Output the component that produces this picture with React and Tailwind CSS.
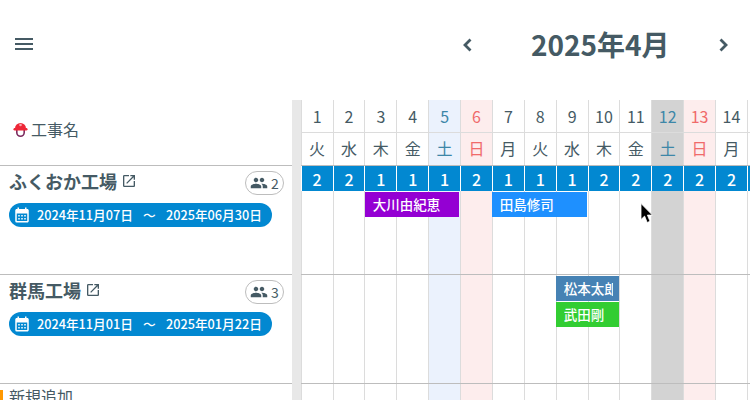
import React from 'react';
import { MdMenu, MdPeople, MdOpenInNew, MdCalendarMonth } from 'react-icons/md';

const DAYS = [
  { d: 1, w: '火', c: 2 },
  { d: 2, w: '水', c: 2 },
  { d: 3, w: '木', c: 1 },
  { d: 4, w: '金', c: 1 },
  { d: 5, w: '土', c: 1, kind: 'sat' },
  { d: 6, w: '日', c: 2, kind: 'sun' },
  { d: 7, w: '月', c: 1 },
  { d: 8, w: '火', c: 1 },
  { d: 9, w: '水', c: 1 },
  { d: 10, w: '木', c: 2 },
  { d: 11, w: '金', c: 2 },
  { d: 12, w: '土', c: 2, kind: 'hol' },
  { d: 13, w: '日', c: 2, kind: 'sun' },
  { d: 14, w: '月', c: 2 },
];

const cellBg = { sat: 'bg-[#ebf2fd]', sun: 'bg-[#fdeded]', hol: 'bg-[#d3d3d3]' };
const textColor = { sat: 'text-[#3d87a8]', sun: 'text-[#f06a6a]', hol: 'text-[#3d87a8]' };

function HelmetIcon() {
  return (
    <svg width="15" height="17" viewBox="0 0 15 17">
      <path d="M3 10v2.5a4.5 4.5 0 0 0 9 0V10h-1.6v2.5a2.9 2.9 0 0 1-5.8 0V10z" fill="#7b2a5e" />
      <path d="M2 8.5a5.5 5.5 0 0 1 11 0z" fill="#ee2737" />
      <rect x="0.5" y="8" width="14" height="2.4" rx="1.2" fill="#ee2737" />
      <circle cx="7.5" cy="5" r="1.3" fill="#f8a5ac" />
    </svg>
  );
}

function Chevron({ d }) {
  return (
    <svg width="10" height="14" viewBox="0 0 10 14" className="shrink-0">
      <path d={d} fill="none" stroke="#455a64" strokeWidth="2.8" />
    </svg>
  );
}

function Site({ name, people, from, to }) {
  return (
    <div className="h-[109px] border-b border-[#bdbdbd] pl-[9px] pr-2 pt-[5px]">
      <div className="flex items-center h-6">
        <div className="flex items-center pb-[4px]">
          <span className="text-[18px] font-bold text-[#455a64] leading-6">{name}</span>
          <MdOpenInNew className="ml-[4px] w-4 h-4 text-[#455a64]" />
        </div>
        <div className="ml-auto flex items-center justify-center w-[39px] h-6 rounded-full border border-[#bdbdbd] text-[#455a64]">
          <MdPeople className="w-[18px] h-[18px]" />
          <span className="ml-[3px] text-[14px] leading-none">{people}</span>
        </div>
      </div>
      <div className="mt-2 flex items-center w-[263px] h-6 rounded-full bg-[#0288d1] text-white text-[12.7px] font-medium pl-[4px]">
        <MdCalendarMonth className="w-[18px] h-[18px] shrink-0" />
        <span className="ml-[6px] w-[96px] whitespace-nowrap">{from}</span>
        <span className="ml-[10px] w-[13px]">〜</span>
        <span className="ml-[10px] whitespace-nowrap">{to}</span>
      </div>
    </div>
  );
}

function Cells({ height }) {
  return (
    <div className={`flex ${height}`}>
      {DAYS.map((x) => (
        <div key={x.d} className={`w-[31.875px] shrink-0 border-l border-[#dcdcdc] ${cellBg[x.kind] || ''}`} />
      ))}
      <div className="w-[31.875px] shrink-0 border-l border-[#dcdcdc]" />
    </div>
  );
}

function Bar({ pos, color, children }) {
  return (
    <div className={`absolute h-[25px] pl-2 pr-[6px] text-white text-[13.5px] font-medium leading-[25px] ${pos} ${color}`}>
      <div className="overflow-hidden whitespace-nowrap">{children}</div>
    </div>
  );
}

export default function App() {
  return (
    <div className="relative w-[750px] h-[400px] overflow-hidden bg-white text-[#455a64] font-['Noto_Sans_CJK_JP','Noto_Sans',sans-serif]">
      {/* top bar */}
      <header className="flex items-center h-[100px] pb-[12px]">
        <MdMenu className="ml-[12px] w-6 h-6 text-[#455a64]" />
        <div className="ml-[426px] pt-[2px]"><Chevron d="M8.5 1.5 L3 7 L8.5 12.5" /></div>
        <h1 className="ml-[59px] w-[136px] text-[28px] font-bold whitespace-nowrap leading-none">2025年4月</h1>
        <div className="ml-[52px] pt-[2px]"><Chevron d="M1.5 1.5 L7 7 L1.5 12.5" /></div>
      </header>

      <div className="flex">
        {/* left names */}
        <div className="w-[292px] shrink-0">
          <div className="h-[66px] border-b border-[#bdbdbd] flex items-center pl-[13px] pb-[8px]">
            <HelmetIcon />
            <span className="ml-[3px] text-[16px] leading-none">工事名</span>
          </div>
          <Site name="ふくおか工場" people={2} from="2024年11月07日" to="2025年06月30日" />
          <Site name="群馬工場" people={3} from="2024年11月01日" to="2025年01月22日" />
          <div className="relative pl-[9px] pt-[2px] text-[16px] leading-[20px] whitespace-nowrap">
            <span className="absolute left-0 top-[6px] w-[3px] h-[12px] bg-[#ff9800]" />
            新規追加
          </div>
        </div>

        <div className="w-[8.7px] shrink-0 bg-[#e8e8e8] h-[300px]" />

        {/* calendar */}
        <div className="flex-1 min-w-0 overflow-hidden">
          <div className="flex h-[33px] border-b border-[#dcdcdc] w-[480px]">
            {DAYS.map((x) => (
              <div key={x.d} className={`w-[31.875px] shrink-0 border-l border-[#dcdcdc] flex items-center justify-center text-[16px] ${cellBg[x.kind] || ''} ${textColor[x.kind] || ''}`}>
                {x.d}
              </div>
            ))}
            <div className="w-[31.875px] shrink-0 border-l border-[#dcdcdc]" />
          </div>
          <div className="flex h-[33px] border-b border-[#bdbdbd] w-[480px]">
            {DAYS.map((x) => (
              <div key={x.d} className={`w-[31.875px] shrink-0 border-l border-[#dcdcdc] flex items-center justify-center pb-[2px] text-[16px] ${cellBg[x.kind] || ''} ${textColor[x.kind] || ''}`}>
                {x.w}
              </div>
            ))}
            <div className="w-[31.875px] shrink-0 border-l border-[#dcdcdc]" />
          </div>

          <div className="relative h-[109px] border-b border-[#bdbdbd] w-[480px]">
            <div className="flex h-[25px]">
              {DAYS.map((x) => (
                <div key={x.d} className="w-[31.875px] shrink-0 border-l border-white bg-[#0288d1] flex items-center justify-center text-white text-[16px] font-medium">
                  {x.c}
                </div>
              ))}
              <div className="w-[31.875px] shrink-0 border-l border-white bg-[#0288d1]" />
            </div>
            <Cells height="h-[83px]" />
            <Bar pos="left-[64px] top-[26px] w-[94px]" color="bg-[#9400d3]">大川由紀恵</Bar>
            <Bar pos="left-[191px] top-[26px] w-[95px]" color="bg-[#1e90ff]">田島修司</Bar>
          </div>

          <div className="relative h-[109px] border-b border-[#bdbdbd] w-[480px]">
            <Cells height="h-[108px]" />
            <Bar pos="left-[255px] top-[1px] w-[63px]" color="bg-[#4682b4]">松本太郎</Bar>
            <Bar pos="left-[255px] top-[27px] w-[63px]" color="bg-[#32cd32]">武田剛</Bar>
          </div>
          <Cells height="h-[16px]" />
        </div>
      </div>

      {/* mouse cursor */}
      <svg className="absolute left-[640px] top-[203px]" width="14" height="21" viewBox="0 0 14 21">
        <path d="M1 0.5v16l3.6-3.4 2.6 6.4 2.8-1.2-2.6-6.2h5z" fill="#000" stroke="#fff" strokeWidth="0.8" />
      </svg>
    </div>
  );
}
